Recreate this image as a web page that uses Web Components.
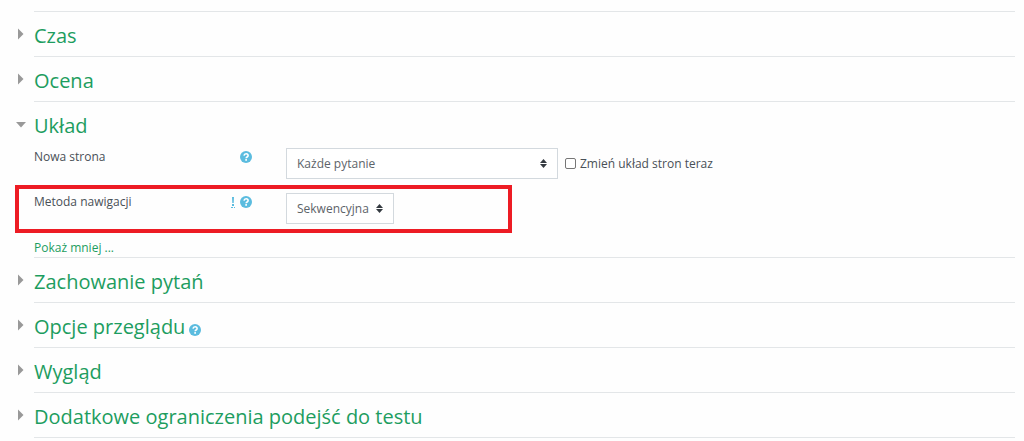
<!DOCTYPE html>
<html lang="pl">
<head>
<meta charset="utf-8">
<meta name="viewport" content="width=device-width, initial-scale=1">
<title>Ustawienia testu</title>
<style>
    body {
        margin: 0;
        padding: 11px 9px 0 34px;
        background: #fefefe;
        color: #495057;
        font: 12px/18px "Open Sans", "Noto Sans", sans-serif;
    }
</style>
</head>
<body>
    <quiz-form>
        <form-section heading="Czas"></form-section>
        <form-section heading="Ocena"></form-section>
        <form-section heading="Układ" open>
            <select-field label="Nowa strona" value="Każde pytanie" wide>
                <check-field label="Zmień układ stron teraz"></check-field>
            </select-field>
            <select-field label="Metoda nawigacji" value="Sekwencyjna" advanced highlighted></select-field>
            <show-less></show-less>
        </form-section>
        <form-section heading="Zachowanie pytań"></form-section>
        <form-section heading="Opcje przeglądu">
            <help-button slot="help"></help-button>
        </form-section>
        <form-section heading="Wygląd"></form-section>
        <form-section heading="Dodatkowe ograniczenia podejść do testu"></form-section>
    </quiz-form>

<script>
class QuizForm extends HTMLElement {
    constructor() {
        super();
        this.attachShadow({ mode: 'open' }).innerHTML = `
            <style>
                :host {
                    display: block;
                    border-bottom: 1px solid #e3e6e8;
                }
            </style>
            <slot></slot>
        `;
    }
}

class HelpButton extends HTMLElement {
    constructor() {
        super();
        this.attachShadow({ mode: 'open' }).innerHTML = `
            <style>
                :host { display: inline-flex; }
                button {
                    display: block;
                    padding: 0;
                    border: 0;
                    background: none;
                    cursor: pointer;
                }
                svg {
                    display: block;
                    width: 12px;
                    height: 12px;
                }
            </style>
            <button type="button" aria-label="Pomoc">
                <svg viewBox="0 0 24 24" aria-hidden="true">
                    <circle cx="12" cy="12" r="12" fill="#5bbcdf"/>
                    <path d="M8 9.3C8.4 6.8 10 5.6 12.2 5.6c2.300 0 4 1.400 4 3.400 0 3-3.900 2.900-3.900 5.600" fill="none" stroke="#fff" stroke-width="3.200"/>
                    <rect x="10.500" y="16.200" width="3.500" height="3.300" fill="#fff"/>
                </svg>
            </button>
        `;
    }
}

class FormSection extends HTMLElement {
    constructor() {
        super();
        this.attachShadow({ mode: 'open' }).innerHTML = `
            <style>
                :host {
                    display: block;
                    border-top: 1px solid #e3e6e8;
                }
                header {
                    display: flex;
                    align-items: center;
                    gap: 4px;
                    margin-left: -18px;
                    padding: 10px 0 6px;
                }
                h3 {
                    margin: 0;
                    font-size: 20px;
                    font-weight: 400;
                    line-height: 28px;
                }
                a {
                    display: flex;
                    gap: 8px;
                    color: #1d9d5f;
                    text-decoration: none;
                }
                svg {
                    width: 10px;
                    height: 12px;
                    margin-top: 6px;
                    fill: #999;
                }
                .down { display: none; }
                :host([open]) .down { display: block; }
                :host([open]) .right { display: none; }
                ::slotted([slot="help"]) { padding-top: 6px; }
                .fields {
                    display: none;
                    padding-top: 2px;
                }
                :host([open]) .fields {
                    display: grid;
                    gap: 14px;
                }
            </style>
            <header>
                <h3>
                    <a href="#" aria-expanded="false">
                        <svg class="right" viewBox="0 0 10 12" aria-hidden="true"><path d="M2 0.500 7.500 6 2 11.500z"/></svg>
                        <svg class="down" viewBox="0 0 10 12" aria-hidden="true"><path d="M0 4h10L5 9.500z"/></svg>
                        <span></span>
                    </a>
                </h3>
                <slot name="help"></slot>
            </header>
            <div class="fields"><slot></slot></div>
        `;
    }

    connectedCallback() {
        const link = this.shadowRoot.querySelector('a');
        link.querySelector('span').textContent = this.getAttribute('heading');
        link.setAttribute('aria-expanded', this.hasAttribute('open'));
        link.addEventListener('click', (event) => {
            event.preventDefault();
            link.setAttribute('aria-expanded', this.toggleAttribute('open'));
        });
    }
}

class SelectField extends HTMLElement {
    constructor() {
        super();
        this.attachShadow({ mode: 'open' }).innerHTML = `
            <style>
                :host {
                    display: grid;
                    grid-template-columns: 252px 1fr;
                    position: relative;
                }
                /* red frame drawn around the whole row */
                :host([highlighted])::before {
                    content: "";
                    position: absolute;
                    inset: -8px auto -9px -19px;
                    width: 489px;
                    border: 4px solid #ed1c24;
                    pointer-events: none;
                }
                .name {
                    display: flex;
                    justify-content: space-between;
                    align-items: center;
                    height: 18px;
                    padding-right: 34px;
                }
                .icons {
                    display: flex;
                    align-items: center;
                    gap: 5px;
                }
                abbr {
                    display: none;
                    border-bottom: 1px dotted #5bbcdf;
                    text-decoration: none;
                }
                :host([advanced]) abbr { display: block; }
                abbr svg {
                    display: block;
                    width: 4px;
                    height: 10px;
                    fill: #5bbcdf;
                }
                .control {
                    display: flex;
                    flex-wrap: wrap;
                    align-items: center;
                    gap: 7px;
                }
                .box {
                    display: flex;
                    align-items: center;
                    position: relative;
                }
                select {
                    appearance: none;
                    height: 31px;
                    margin: 0;
                    padding: 0 24px 0 10px;
                    border: 1px solid #d3d9de;
                    border-radius: 0;
                    background: #fff;
                    color: #5d6369;
                    font: inherit;
                }
                :host([wide]) select { width: 272px; }
                .box svg {
                    position: absolute;
                    right: 11px;
                    width: 7px;
                    height: 9px;
                    fill: #343a40;
                    pointer-events: none;
                }
            </style>
            <div class="name">
                <label for="field"></label>
                <span class="icons">
                    <abbr title="Element zaawansowany">
                        <svg viewBox="0 0 4 10" aria-hidden="true"><path d="M1 0h2L2.700 6H1.300zM1 7h2v2H1z"/></svg>
                    </abbr>
                    <help-button></help-button>
                </span>
            </div>
            <div class="control">
                <span class="box">
                    <select id="field"><option></option></select>
                    <svg viewBox="0 0 7 9" aria-hidden="true"><path d="M3.500 0 7 4H0zM0 5h7L3.500 9z"/></svg>
                </span>
                <slot></slot>
            </div>
        `;
    }

    connectedCallback() {
        this.shadowRoot.querySelector('label').textContent = this.getAttribute('label');
        this.shadowRoot.querySelector('option').textContent = this.getAttribute('value');
    }
}

class CheckField extends HTMLElement {
    constructor() {
        super();
        this.attachShadow({ mode: 'open' }).innerHTML = `
            <style>
                :host { display: block; }
                label {
                    display: flex;
                    align-items: center;
                    gap: 4px;
                }
                input {
                    appearance: none;
                    width: 11px;
                    height: 11px;
                    margin: 0;
                    border: 1px solid #767676;
                    border-radius: 2px;
                    background: #fff;
                }
                input:checked { background: #1d9d5f; }
            </style>
            <label><input type="checkbox"><span></span></label>
        `;
    }

    connectedCallback() {
        this.shadowRoot.querySelector('span').textContent = this.getAttribute('label');
    }
}

class ShowLess extends HTMLElement {
    constructor() {
        super();
        this.attachShadow({ mode: 'open' }).innerHTML = `
            <style>
                :host {
                    display: block;
                    padding-top: 1px;
                }
                a {
                    color: #1d9d5f;
                    text-decoration: none;
                }
            </style>
            <a href="#">Pokaż mniej ...</a>
        `;
    }
}

customElements.define('quiz-form', QuizForm);
customElements.define('help-button', HelpButton);
customElements.define('form-section', FormSection);
customElements.define('select-field', SelectField);
customElements.define('check-field', CheckField);
customElements.define('show-less', ShowLess);
</script>
</body>
</html>
